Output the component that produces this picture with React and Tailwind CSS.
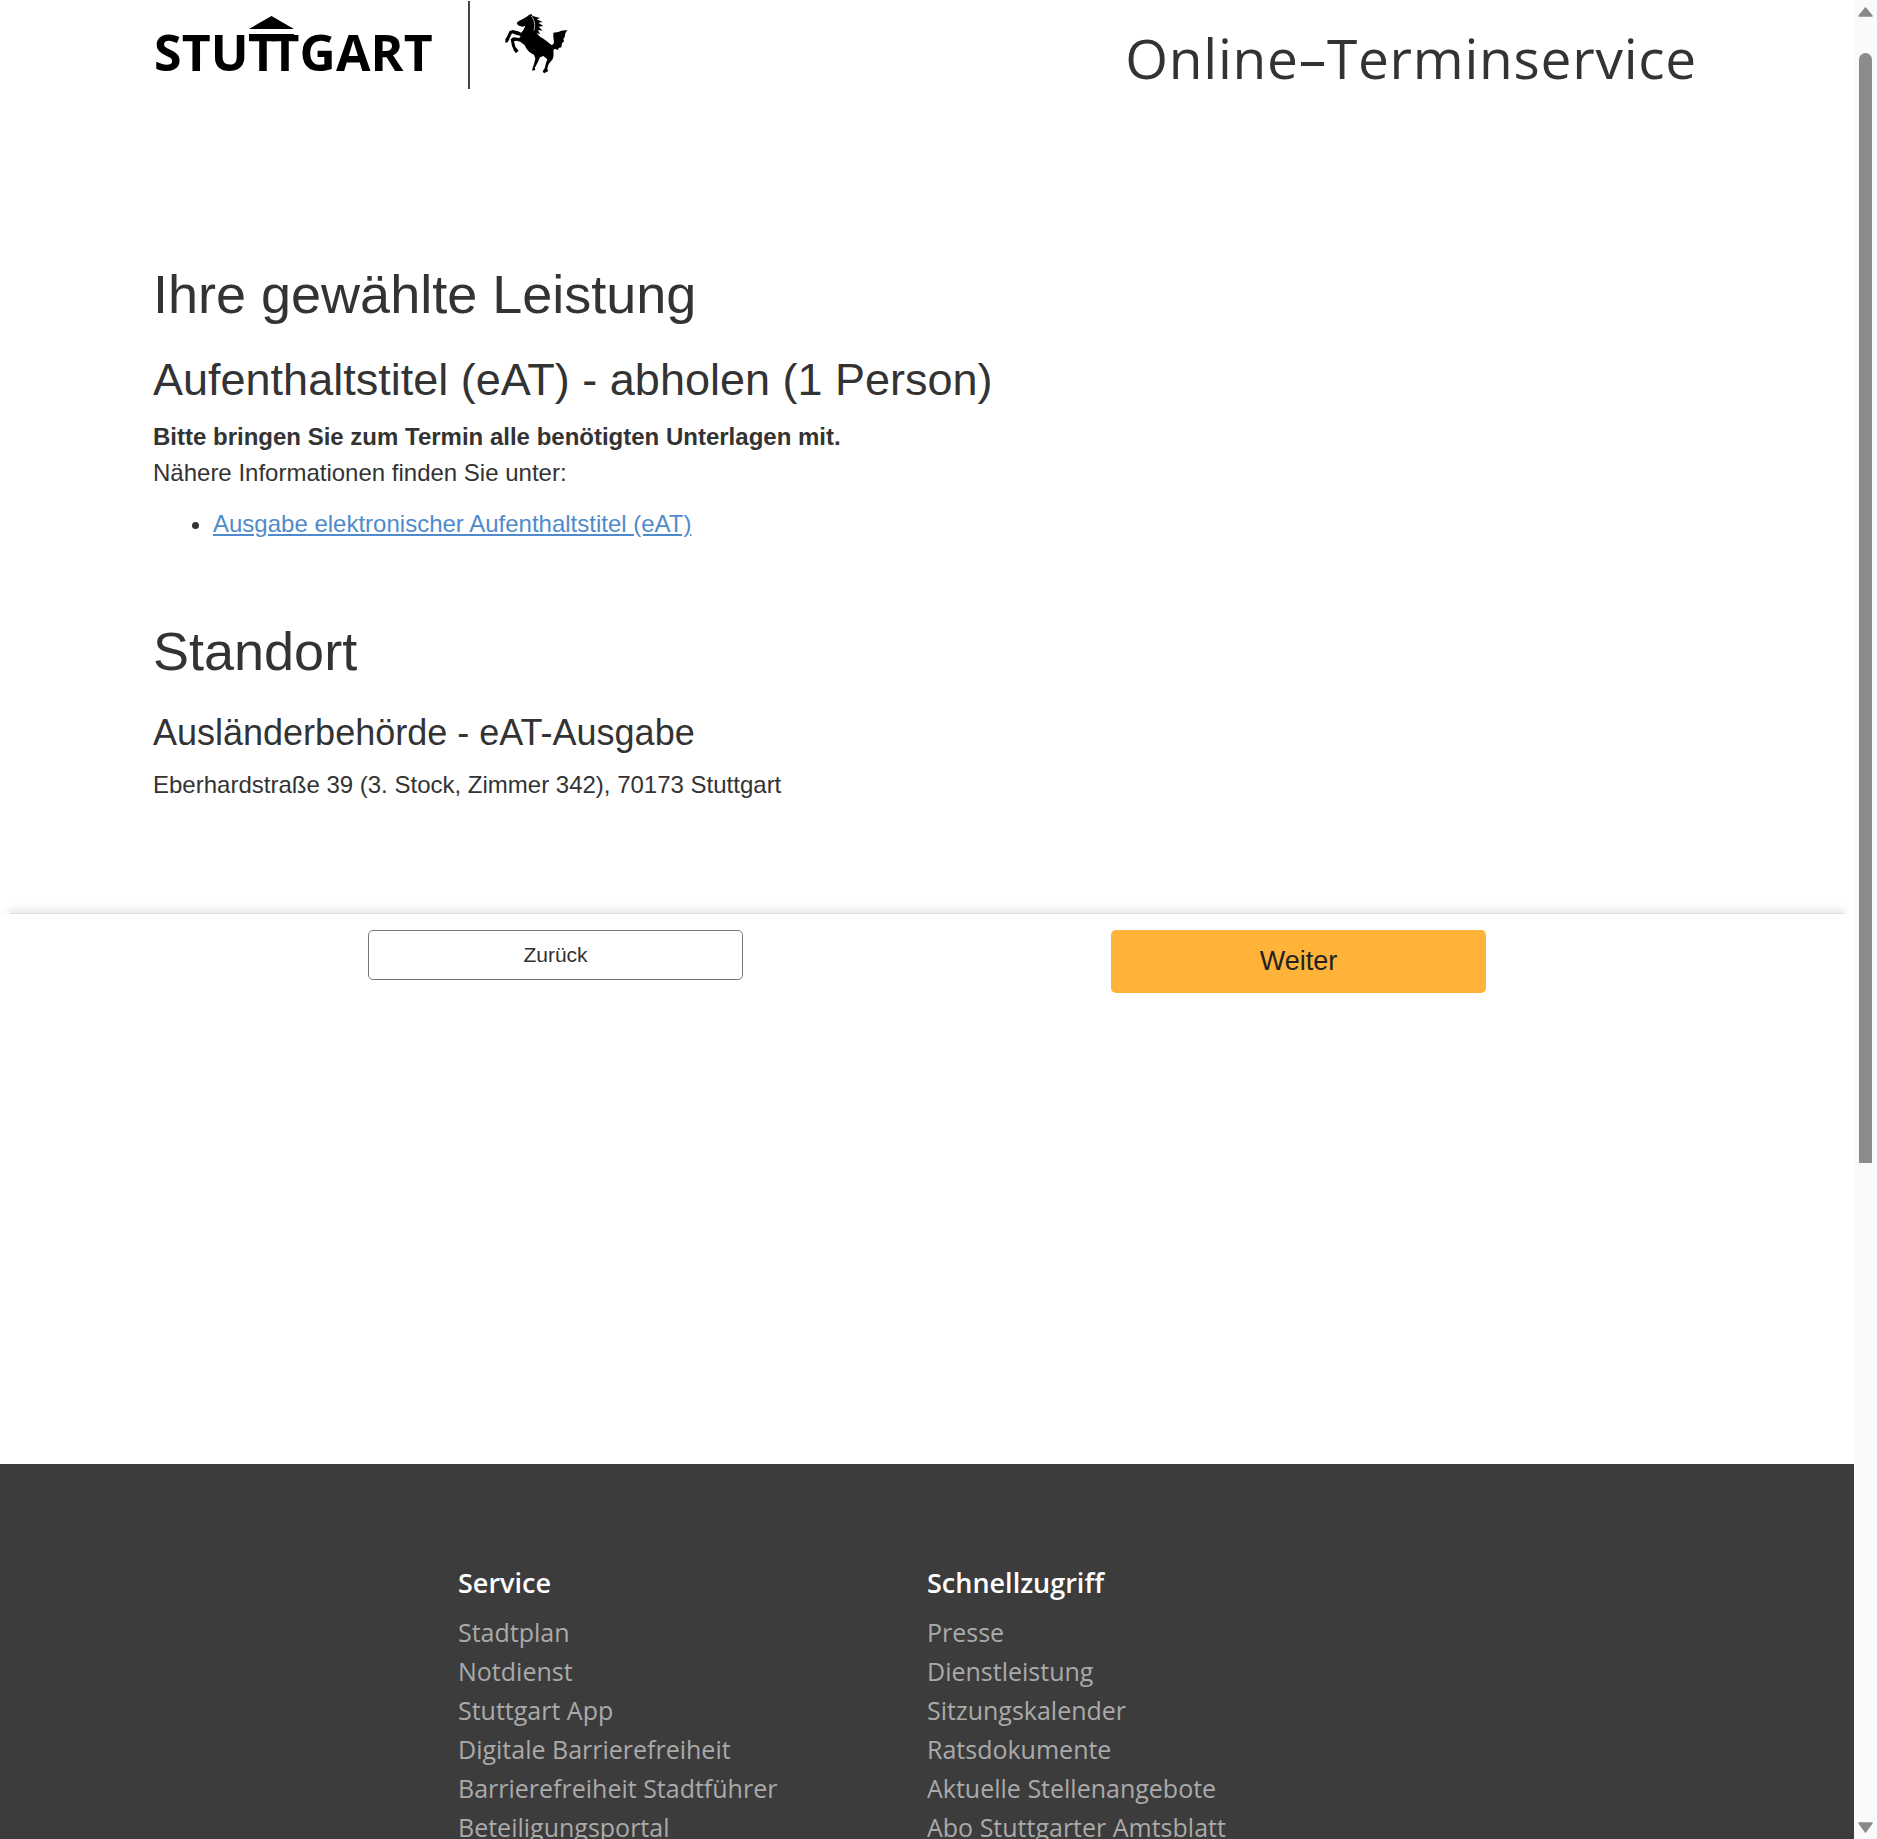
const sans = 'font-["Liberation_Sans",Arial,sans-serif]'
const open = 'font-["Open_Sans",sans-serif]'

const service = ['Stadtplan', 'Notdienst', 'Stuttgart App', 'Digitale Barrierefreiheit', 'Barrierefreiheit Stadtführer', 'Beteiligungsportal']
const schnell = ['Presse', 'Dienstleistung', 'Sitzungskalender', 'Ratsdokumente', 'Aktuelle Stellenangebote', 'Abo Stuttgarter Amtsblatt']

function Logo() {
  return (
    <div className="flex items-start">
      <div className="relative w-[315px] h-[88px] pl-[1px]">
        <span className={`${open} block text-[50px] leading-[50px] font-bold text-black pt-[27px] tracking-[0.1px]`}>
          STU<span className="tracking-[-7px]">T</span>TGART
        </span>
        {/* roof and beam over the two T columns */}
        <svg className="absolute left-[96px] top-[16px]" width="45" height="25" viewBox="0 0 45 25">
          <polygon points="22.5,0 45,13 0,13" fill="#000" />
          <rect x="0" y="18" width="45" height="7" fill="#000" />
        </svg>
      </div>
      <div className="w-[2px] h-[88px] bg-[#444] mt-[1px]" />
      <svg className="ml-[20px]" width="90" height="90" viewBox="0 0 270 270">
        <path fill="#000" d="M118 44 L124 42 L128 48 L150 54 L140 58 L158 66 L145 68 L160 78 L146 80 L158 92 L144 90 L150 102 L140 100 L150 110 C165 118 175 128 186 136 L192 128 L190 110 L190 98 L205 96 L214 92 L232 90 L226 100 L224 112 L220 116 L222 124 L216 130 L214 142 L206 144 L204 150 L194 146 L190 152 C192 165 190 175 186 180 L176 192 L172 205 L174 214 L162 220 L158 214 L164 205 L168 190 L172 178 L160 168 L150 172 L142 190 L134 204 L136 210 L126 212 L128 204 L132 192 L136 176 L132 164 C120 160 110 150 104 136 L92 126 L80 122 L72 124 L76 140 L86 152 L78 160 L72 152 L66 138 L62 118 L70 112 L88 114 L92 108 L78 104 L66 100 L60 112 L54 126 L46 128 L46 118 L52 108 L58 94 L68 90 L84 94 L94 98 L100 90 L106 78 L96 80 L84 76 L80 68 L88 62 L100 56 L110 50 Z" />
        <path fill="none" stroke="#fff" strokeWidth="2" d="M124 48 C134 60 136 76 132 92" />
      </svg>
    </div>
  )
}

function FooterCol({ title, links, className }) {
  return (
    <div className={className}>
      <h3 className={`${open} text-[27px] leading-[39px] font-semibold text-white mb-[11px]`}>{title}</h3>
      <ul className="flex flex-col">
        {links.map(l => (
          <li key={l} className={`${open} text-[25px] leading-[39px] text-[#aaaaaa]`}>{l}</li>
        ))}
      </ul>
    </div>
  )
}

function Scrollbar() {
  return (
    <div className="w-[23px] h-full bg-[#fafafa] flex flex-col items-center shrink-0">
      <svg className="mt-[7px] shrink-0" width="15" height="10" viewBox="0 0 15 10">
        <polygon points="7.5,1 14,9 1,9" fill="#8a8a8a" stroke="#8a8a8a" strokeWidth="1.5" strokeLinejoin="round" />
      </svg>
      <div className="w-[13px] h-[1110px] mt-[36px] shrink-0 rounded-t-full rounded-b-[7px] bg-[#8b8b8b]" />
      <svg className="mt-auto mb-[6px] shrink-0" width="15" height="11" viewBox="0 0 15 11">
        <polygon points="1,1 14,1 7.5,10" fill="#8a8a8a" stroke="#8a8a8a" strokeWidth="1.5" strokeLinejoin="round" />
      </svg>
    </div>
  )
}

export default function App() {
  return (
    <div className={`${sans} h-[1839px] w-full flex overflow-hidden bg-white text-[#333333]`}>
      <div className="flex-1 min-w-0 flex flex-col">
        <header className="h-[120px] shrink-0 flex justify-between pl-[153px] pr-[157px]">
          <Logo />
          <div className={`${open} text-[55px] leading-[56px] pt-[30px] tracking-[0.75px] text-[#333333]`}>Online–Terminservice</div>
        </header>

        <main className="pl-[153px] h-[793px] shrink-0 pt-[138px]">
          <h1 className="text-[54px] leading-[72px]">Ihre gewählte Leistung</h1>
          <h2 className="text-[45px] leading-[60px] mt-[20px]">Aufenthaltstitel (eAT) - abholen (1 Person)</h2>
          <p className="text-[24px] leading-[36px] font-bold mt-[9px]">Bitte bringen Sie zum Termin alle benötigten Unterlagen mit.</p>
          <p className="text-[24px] leading-[36px]">Nähere Informationen finden Sie unter:</p>
          <ul className="list-disc pl-[60px] mt-[15px]">
            <li className="text-[24px] leading-[36px]">
              <a href="#" className="text-[#4f8bcb] underline">Ausgabe elektronischer Aufenthaltstitel (eAT)</a>
            </li>
          </ul>
          <h1 className="text-[54px] leading-[72px] mt-[73px]">Standort</h1>
          <h3 className="text-[36px] leading-[48px] mt-[22px]">Ausländerbehörde - eAT-Ausgabe</h3>
          <p className="text-[24px] leading-[36px] mt-[10px]">Eberhardstraße 39 (3. Stock, Zimmer 342), 70173 Stuttgart</p>
        </main>

        <div className="h-[1px] shrink-0 mx-[10px] bg-[#dedede] shadow-[0_-1px_7px_2px_rgba(0,0,0,0.13)]" />

        <div className="relative h-[550px] shrink-0 bg-white flex items-start pt-[16px] pl-[368px]">
          <button className="w-[375px] h-[50px] border border-[#777] rounded-[5px] text-[21px] text-[#333]">Zurück</button>
          <button className="w-[375px] h-[63px] ml-[368px] rounded-[5px] bg-[#ffb338] text-[27px] text-[#222]">Weiter</button>
        </div>

        <footer className="flex-1 min-h-0 overflow-hidden bg-[#3c3c3c] flex pl-[458px] pt-[99px]">
          <FooterCol title="Service" links={service} className="w-[469px]" />
          <FooterCol title="Schnellzugriff" links={schnell} />
        </footer>
      </div>
      <Scrollbar />
    </div>
  )
}
